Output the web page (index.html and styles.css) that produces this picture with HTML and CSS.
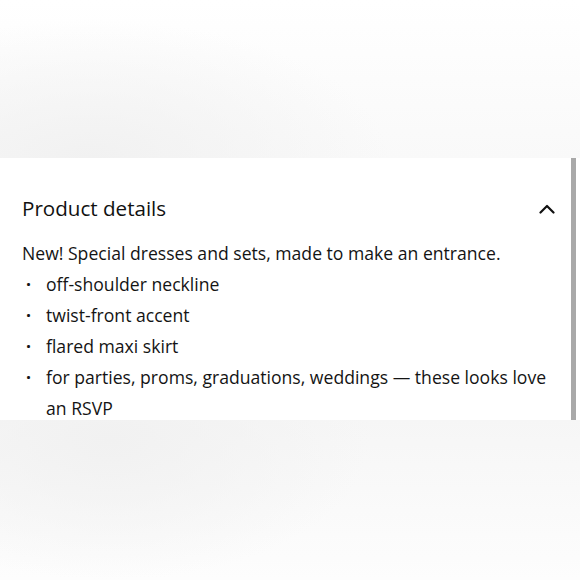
FILE: index.html
```html
<!DOCTYPE html>
<html>
<head>
<meta charset="utf-8">
<link rel="stylesheet" href="styles.css">
</head>
<body>
<div class="page">
  <div class="band band-top"></div>
  <section class="panel">
    <div class="content">
      <div class="header">
        <h2 class="title">Product details</h2>
        <svg class="chev" width="16" height="10" viewBox="0 0 16 10"><path d="M1.5 8.5 L8 2 L14.5 8.5" fill="none" stroke="#111" stroke-width="2.2" stroke-linecap="round" stroke-linejoin="round"/></svg>
      </div>
      <p class="intro">New! Special dresses and sets, made to make an entrance.</p>
      <ul class="list">
        <li>off-shoulder neckline</li>
        <li>twist-front accent</li>
        <li>flared maxi skirt</li>
        <li>for parties, proms, graduations, weddings — these looks love an RSVP</li>
      </ul>
    </div>
    <div class="scrollbar"></div>
  </section>
  <div class="band band-bottom"></div>
</div>
</body>
</html>
```
FILE: styles.css
```css
html, body { margin: 0; padding: 0; }
body { width: 580px; height: 580px; overflow: hidden; background: #fff; font-family: "Open Sans", "Noto Sans", sans-serif; color: #141414; }
.page { display: flex; flex-direction: column; height: 580px; }
.band { flex: none; }
.band-top { height: 158px; background:
  radial-gradient(ellipse 300px 140px at 90px 160px, #f1f1f1 0%, rgba(241,241,241,0) 100%),
  linear-gradient(180deg, #ffffff 0%, #f9f9f9 100%); }
.band-bottom { height: 160px; background:
  radial-gradient(ellipse 260px 140px at 110px 20px, #f1f1f1 0%, rgba(241,241,241,0) 100%),
  linear-gradient(180deg, #f6f6f6 0%, #fdfdfd 100%); }
.panel { flex: none; height: 262px; display: flex; background: #fff; }
.content { flex: 1; padding: 36px 0 0 22px; }
.header { display: flex; align-items: center; justify-content: space-between; padding-right: 16px; }
.title { margin: 0; font-weight: 400; font-size: 20.6px; line-height: 28px; color: #111; }
.chev { display: block; margin-top: 1px; }
.intro { margin: 16px 0 0; font-size: 17.6px; line-height: 31px; }
.list { margin: 0; padding: 0; list-style: none; }
.list li { position: relative; padding-left: 24px; font-size: 17.6px; line-height: 31px; padding-right: 16px; }
.list li::before { content: "·"; position: absolute; left: 4px; top: 0; font-weight: 700; }
.scrollbar { flex: none; width: 5px; margin-right: 4px; background: #a9a9a9; }
```
